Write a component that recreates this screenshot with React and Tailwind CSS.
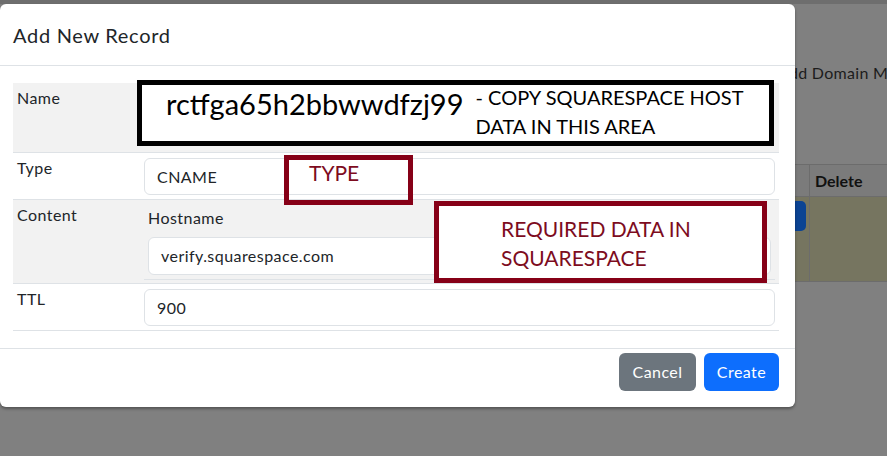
import React from "react";

const ui = { fontFamily: "Lato, 'Open Sans', sans-serif" };
const note = { fontFamily: "Lato, 'Open Sans', sans-serif", letterSpacing: 0 };

function Row({ label, shaded, children, className }) {
  return (
    <div className={`flex border-b border-[#dee2e6] ${shaded ? "bg-[#f2f2f2]" : "bg-white"} ${className || ""}`}>
      <div className="w-[127px] shrink-0 px-[4px] pt-[3px] text-[16px] leading-[24px] text-[#212529]">{label}</div>
      <div className="flex-1">{children}</div>
    </div>
  );
}

function Field({ value }) {
  return (
    <div className="h-[37px] rounded-[6px] border border-[#dee2e6] bg-white px-[12px] flex items-center text-[16px] text-[#212529]">
      {value}
    </div>
  );
}

export default function App() {
  return (
    <div className="relative w-[887px] h-[456px] overflow-hidden bg-[#808080] tracking-[0.45px]" style={ui}>
      {/* dimmed page behind the modal */}
      <div className="h-[4px] bg-[#6e6e6e]" />
      <div className="pl-[778px] pt-[57px] h-[82px] text-[16px] leading-[24px] tracking-[0.3px] text-[#1c1c1c] whitespace-nowrap">
        Add Domain Management
      </div>
      <div className="mt-[78px] flex whitespace-nowrap">
        <div className="w-[700px] shrink-0" />
        <div className="flex-1 flex flex-col">
          <div className="flex h-[33px] border-y border-[#6c6c6c] bg-[#7b7b7b]">
            <div className="w-[110px] border-r border-[#6c6c6c]" />
            <div className="flex-1 px-[5px] flex items-center text-[16px] font-bold text-[#111] tracking-normal">Delete</div>
          </div>
          <div className="flex h-[85px] border-b border-[#6c6c6c] bg-[#767560]">
            <div className="w-[110px] border-r border-[#6c6c6c] flex justify-end pr-[3px] pt-[4px]">
              <div className="w-[40px] h-[30px] rounded-[5px] bg-[#0b4393]" />
            </div>
            <div className="flex-1" />
          </div>
        </div>
      </div>

      {/* modal */}
      <div className="absolute left-0 top-[4px] w-[795px] h-[403px] rounded-[6px] bg-white shadow-[0_2px_3px_rgba(0,0,0,0.35)] flex flex-col">
        <div className="h-[62px] px-[13px] flex items-center border-b border-[#dee2e6] text-[20px] tracking-[0.7px] text-[#212529]">
          Add New Record
        </div>
        <div className="pl-[13px] pr-[16px] pt-[17px] pb-[17px]">
          <Row label="Name" shaded className="h-[70px]" />
          <Row label="Type" className="h-[47px]">
            <div className="pt-[5px] px-[4px]">
              <Field value="CNAME" />
            </div>
          </Row>
          <Row label="Content" shaded className="h-[84px]">
            <div className="pt-[6px] px-[4px]">
              <div className="px-[4px] pb-[4px] border-b border-[#dee2e6]">
                <div className="text-[16px] leading-[24px] text-[#212529]">Hostname</div>
                <div className="mt-[7px] h-[38px] rounded-[6px] border border-[#dee2e6] bg-white px-[12px] flex items-center text-[16px] text-[#212529]">
                  verify.squarespace.com
                </div>
              </div>
            </div>
          </Row>
          <Row label="TTL" className="h-[47px]">
            <div className="pt-[5px] px-[4px]">
              <Field value="900" />
            </div>
          </Row>
        </div>
        <div className="border-t border-[#dee2e6] pt-[4px] pr-[16px] flex justify-end gap-[8px]">
          <button className="w-[77px] h-[38px] rounded-[6px] bg-[#6c757d] text-white text-[16px]">Cancel</button>
          <button className="w-[75px] h-[38px] rounded-[6px] bg-[#0d6efd] text-white text-[16px]">Create</button>
        </div>

        {/* annotation: name */}
        <div className="absolute left-[137px] top-[76px] w-[637px] h-[66px] border-[5px] border-black bg-white flex items-start pl-[24px] whitespace-nowrap" style={note}>
          <div className="text-[29px] leading-[32px] pt-[3px] text-black">rctfga65h2bbwwdfzj99</div>
          <div className="pl-[12px] -mt-[2px] text-[20px] leading-[29px] text-black">
            <div>- COPY SQUARESPACE HOST</div>
            <div>DATA IN THIS AREA</div>
          </div>
        </div>

        {/* annotation: type */}
        <div className="absolute left-[284px] top-[151px] w-[129px] h-[50px] border-[5px] border-[#860017] pl-[20px] pt-0 text-[21px] leading-[26px] text-[#7d0c1e]" style={note}>
          TYPE
        </div>

        {/* annotation: required */}
        <div className="absolute left-[434px] top-[197px] w-[333px] h-[82px] border-[5px] border-[#860017] bg-white pl-[62px] pt-[8px] text-[21px] leading-[29px] text-[#7d0c1e]" style={note}>
          <div>REQUIRED DATA IN</div>
          <div>SQUARESPACE</div>
        </div>
      </div>
    </div>
  );
}
